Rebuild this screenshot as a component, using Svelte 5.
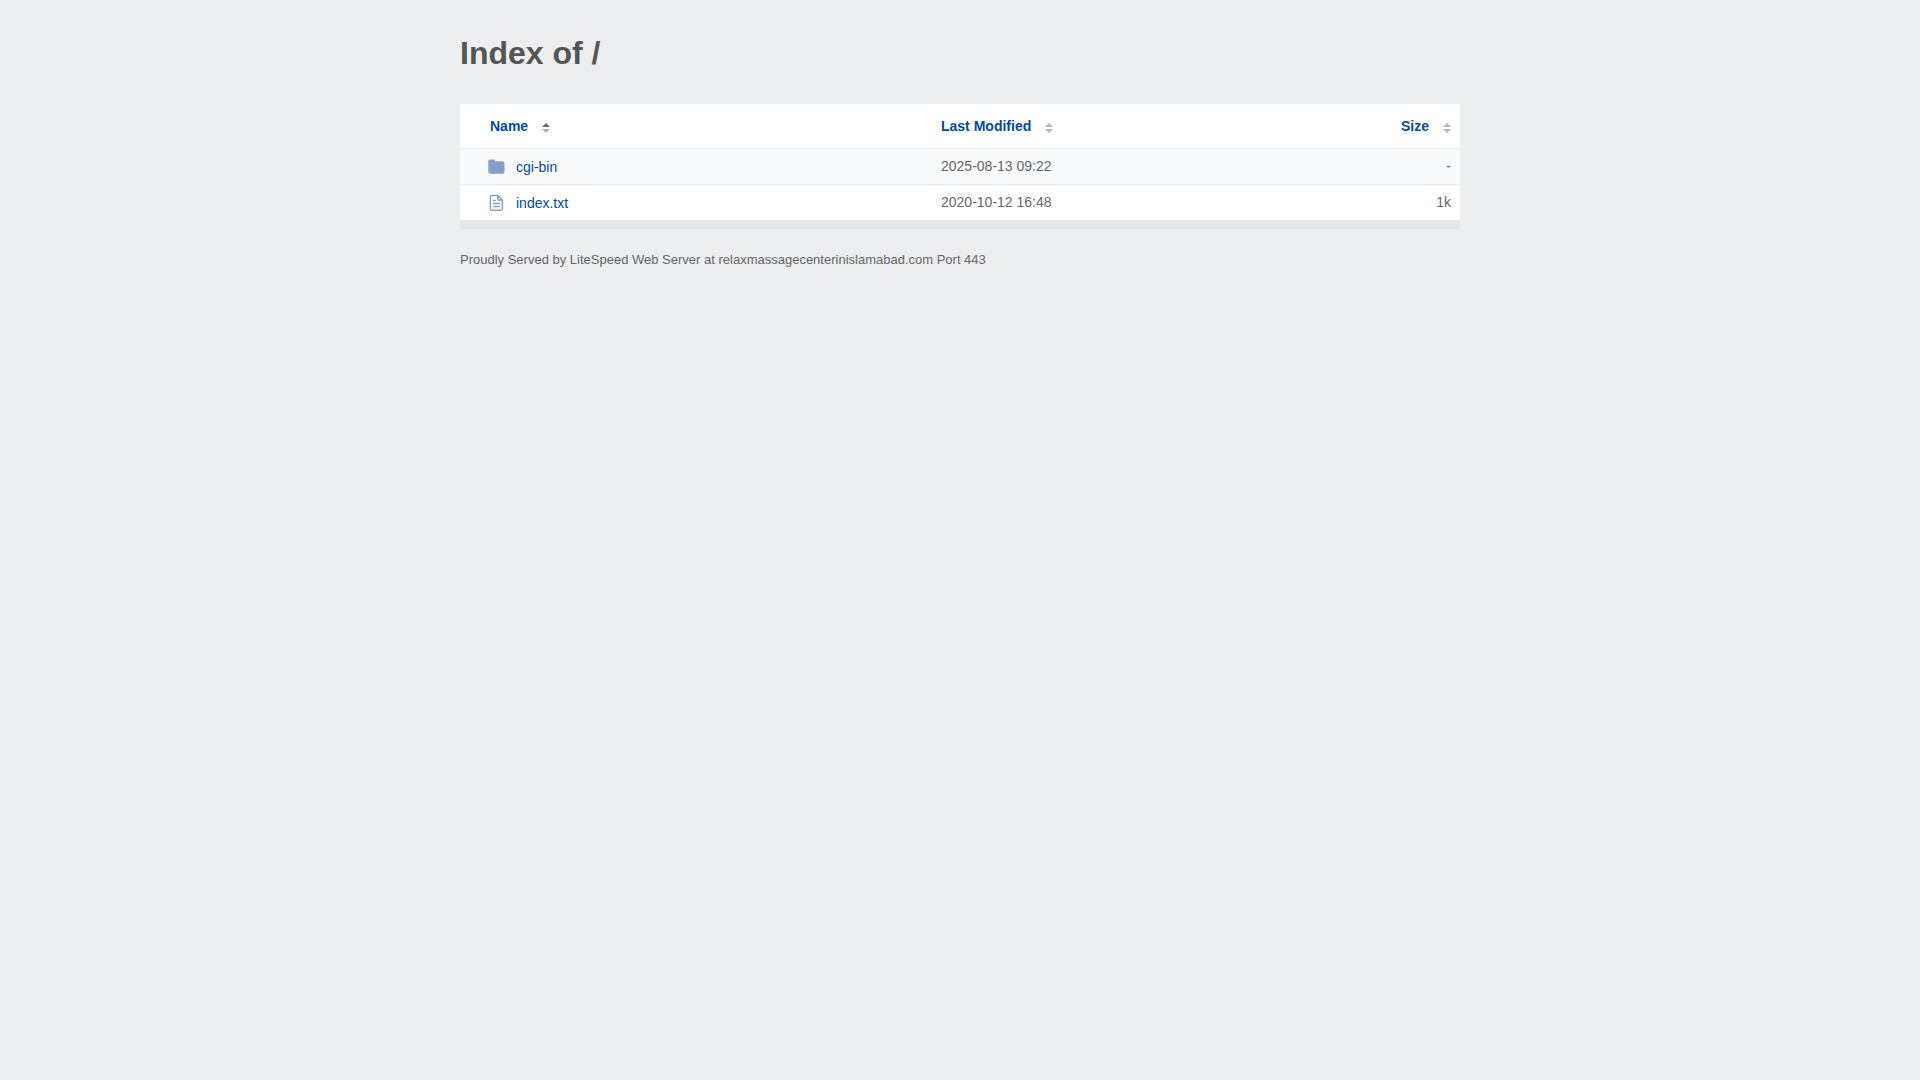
<script lang="ts">
	type SortKey = 'name' | 'modified' | 'size';

	type Entry = {
		name: string;
		kind: 'folder' | 'file';
		modified: string;
		size: string;
		bytes: number;
	};

	const columns: { key: SortKey; label: string }[] = [
		{ key: 'name', label: 'Name' },
		{ key: 'modified', label: 'Last Modified' },
		{ key: 'size', label: 'Size' }
	];

	const entries: Entry[] = [
		{ name: 'cgi-bin', kind: 'folder', modified: '2025-08-13 09:22', size: '-', bytes: -1 },
		{ name: 'index.txt', kind: 'file', modified: '2020-10-12 16:48', size: '1k', bytes: 1024 }
	];

	let sortKey = $state<SortKey>('name');
	let ascending = $state(true);

	const rows = $derived(
		[...entries].sort((a, b) => {
			const order =
				sortKey === 'size' ? a.bytes - b.bytes : a[sortKey].localeCompare(b[sortKey]);
			return ascending ? order : -order;
		})
	);

	function sortBy(key: SortKey) {
		ascending = key === sortKey ? !ascending : true;
		sortKey = key;
	}
</script>

<svelte:head>
	<title>Index of /</title>
</svelte:head>

<main class="listing">
	<h1>Index of /</h1>

	<table>
		<thead>
			<tr>
				{#each columns as column (column.key)}
					{@const active = column.key === sortKey}
					<th
						class={column.key}
						scope="col"
						aria-sort={active ? (ascending ? 'ascending' : 'descending') : 'none'}
					>
						<button type="button" onclick={() => sortBy(column.key)}>
							{column.label}
							<svg class="sort" viewBox="0 0 8 10" aria-hidden="true">
								<path class:active={active && ascending} d="M0 4 4 0 8 4Z" />
								<path class:active={active && !ascending} d="M0 6H8L4 10Z" />
							</svg>
						</button>
					</th>
				{/each}
			</tr>
		</thead>
		<tbody>
			{#each rows as entry (entry.name)}
				<tr>
					<td class="name">
						<a href={entry.kind === 'folder' ? `/${entry.name}/` : `/${entry.name}`}>
							<svg class="icon" viewBox="0 0 18 18" aria-hidden="true">
								{#if entry.kind === 'folder'}
									<path
										fill="currentColor"
										d="M2.3 1.5H5.5Q6.7 1.5 7.1 2.5L7.5 3.2H14.5Q16.5 3.2 16.5 5.2V13.7Q16.5 15.7 14.5 15.7H2.3Q.3 15.7 .3 13.7V3.5Q.3 1.5 2.3 1.5Z"
									/>
								{:else}
									<path
										fill="none"
										stroke="currentColor"
										stroke-width="1.5"
										stroke-linejoin="round"
										d="M3.7 1.5H10L14.4 5.8V14.8Q14.4 16.2 13 16.2H3.7Q2.4 16.2 2.4 14.8V2.9Q2.4 1.5 3.7 1.5ZM9.8 1.7V6H14.3"
									/>
									<path
										fill="none"
										stroke="currentColor"
										stroke-width="1.5"
										stroke-linecap="round"
										d="M5.5 6.6H7.2M5.5 9.5H11.5M5.5 12.5H11.5"
									/>
								{/if}
							</svg>
							{entry.name}
						</a>
					</td>
					<td class="modified">{entry.modified}</td>
					<td class="size">{entry.size}</td>
				</tr>
			{/each}
		</tbody>
	</table>

	<footer>
		Proudly Served by LiteSpeed Web Server at relaxmassagecenterinislamabad.com Port 443
	</footer>
</main>

<style>
	:global(body) {
		background: #edeef0;
		margin: 0;
	}

	.listing {
		box-sizing: border-box;
		color: #666;
		font: 14px/20px 'Liberation Sans', Arial, sans-serif;
		margin: 0 auto;
		max-width: 1040px;
		padding: 32px 20px;
	}

	h1 {
		color: #555;
		font-size: 32px;
		line-height: 42px;
		margin: 0 0 30px;
	}

	table {
		background: #fff;
		border-bottom: 9px solid #e3e7ea;
		border-spacing: 0;
		table-layout: fixed;
		width: 100%;
	}

	th,
	td {
		border-bottom: 1px solid #e9ebed;
		box-sizing: border-box;
		padding: 7px 9px;
		text-align: left;
		vertical-align: top;
	}

	th {
		padding: 12px 9px;
	}

	tbody tr:nth-child(odd) {
		background: #f9fafc;
	}

	tbody tr:last-child td {
		border-bottom: 0;
	}

	th.name {
		padding-left: 30px;
		width: 45%;
	}

	td.name {
		padding-left: 28px;
	}

	th.modified {
		width: 40%;
	}

	th.modified,
	td.modified {
		padding-left: 31px;
	}

	th.size,
	td.size {
		text-align: right;
	}

	button {
		align-items: center;
		background: none;
		border: 0;
		color: #004aad;
		cursor: pointer;
		display: inline-flex;
		font: inherit;
		gap: 14px;
		padding: 0;
		vertical-align: top;
	}

	.sort {
		fill: #b3b3b3;
		height: 10px;
		margin-top: 3px;
		width: 8px;
	}

	.sort .active {
		fill: #666;
	}

	a {
		align-items: center;
		color: #004aad;
		display: inline-flex;
		gap: 10px;
		margin-top: 1px;
		text-decoration: none;
		vertical-align: top;
	}

	button:hover,
	a:hover {
		color: #2a7fd4;
	}

	.icon {
		color: #84a0c7;
		height: 18px;
		width: 18px;
	}

	footer {
		font-size: 13px;
		margin-top: 21px;
	}
</style>
